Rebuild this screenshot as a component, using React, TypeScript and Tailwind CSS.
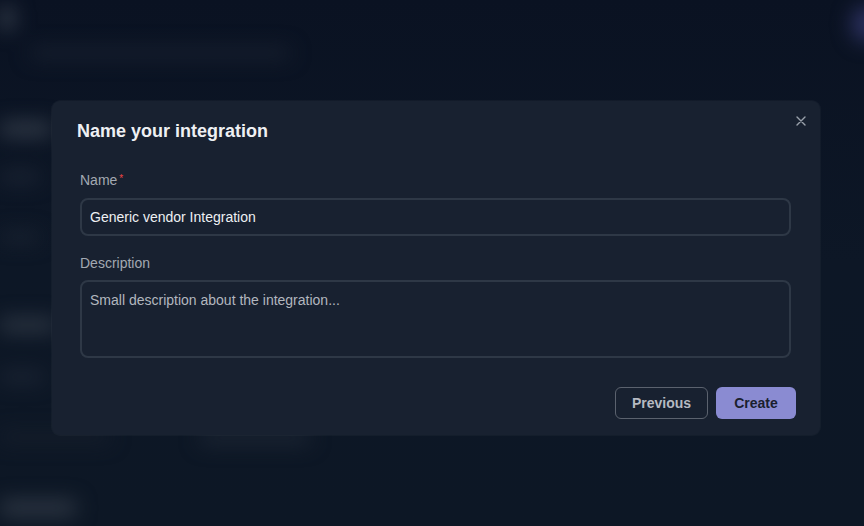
import React from "react";

export default function App() {
  return (
    <div
      className="relative w-[864px] h-[526px] overflow-hidden bg-[#0d1725]"
      style={{ fontFamily: '"Liberation Sans", Arial, sans-serif' }}
    >
      {/* blurred background page */}
      <div className="absolute inset-0 bg-gradient-to-b from-[#0a1222] via-[#0d1726] to-[#0d1725]" />
      <div className="absolute inset-0 blur-[10px]">
        <div className="flex flex-col pt-[6px]">
          <div className="flex items-start justify-between">
            <div className="w-[14px] h-[24px] rounded-full bg-[#3a4350]" />
            <div className="w-[30px] h-[36px] rounded-full bg-[#2c3160] mr-[-18px]" />
          </div>
          <div className="ml-[30px] mt-[6px] w-[260px] h-[10px] rounded bg-[#1a2231]" />
          <div className="mt-[64px] w-[52px] h-[14px] rounded bg-[#343d4a]" />
          <div className="mt-[36px] w-[40px] h-[10px] rounded bg-[#1f2837]" />
          <div className="mt-[50px] w-[40px] h-[10px] rounded bg-[#1c2533]" />
          <div className="mt-[76px] w-[56px] h-[14px] rounded bg-[#2e3744]" />
          <div className="mt-[40px] w-[44px] h-[10px] rounded bg-[#1f2837]" />
          <div className="mt-[50px] flex gap-[90px]">
            <div className="w-[110px] h-[10px] rounded bg-[#171f2c]" />
            <div className="w-[110px] h-[12px] rounded bg-[#1e2735]" />
          </div>
          <div className="mt-[56px] w-[76px] h-[16px] rounded bg-[#2e3744]" />
        </div>
      </div>

      {/* modal */}
      <div className="absolute left-[52px] top-[101px] w-[768px] rounded-lg bg-[#182130] shadow-[0_0_0_1px_rgba(255,255,255,0.03)] pt-[17px] pb-[16px]">
        <button className="absolute right-[13px] top-[14px] w-[12px] h-[12px] flex items-center justify-center text-[#9aa1ab]">
          <svg width="10" height="10" viewBox="0 0 10 10" fill="none" stroke="currentColor" strokeWidth="1.4" strokeLinecap="round">
            <path d="M1 1L9 9M9 1L1 9" />
          </svg>
        </button>
        <h2 className="pl-[25px] text-[18px] leading-[26px] font-bold text-[#eef0f3]">Name your integration</h2>

        <div className="ml-[28px] mr-[29px] mt-[26px] flex flex-col">
          <label className="text-[14px] leading-[20px] text-[#a3a9b2] flex items-start">
            Name<span className="text-[#ef4444] text-[10px] leading-[14px] ml-[2px] mt-[2px]">*</span>
          </label>
          <div className="mt-[8px] h-[38px] rounded-lg border-2 border-[#2e3846] flex items-center px-[8px] text-[14px] text-[#eef0f3]">
            Generic vendor Integration
          </div>

          <label className="mt-[17px] text-[14px] leading-[20px] text-[#a3a9b2]">Description</label>
          <div className="mt-[7px] h-[78px] rounded-lg border-2 border-[#2e3846] px-[8px] pt-[8px] text-[14px] leading-[20px] text-[#b2b7bf]">
            Small description about the integration...
          </div>
        </div>

        <div className="mt-[29px] pr-[24px] flex justify-end gap-[8px]">
          <button className="w-[93px] h-[32px] rounded-md border border-[#5b626e] text-[14px] font-bold text-[#b6bac2]">
            Previous
          </button>
          <button className="w-[80px] h-[32px] rounded-md bg-[#8a8bd2] text-[14px] font-bold text-[#1a1f2e]">
            Create
          </button>
        </div>
      </div>
    </div>
  );
}
